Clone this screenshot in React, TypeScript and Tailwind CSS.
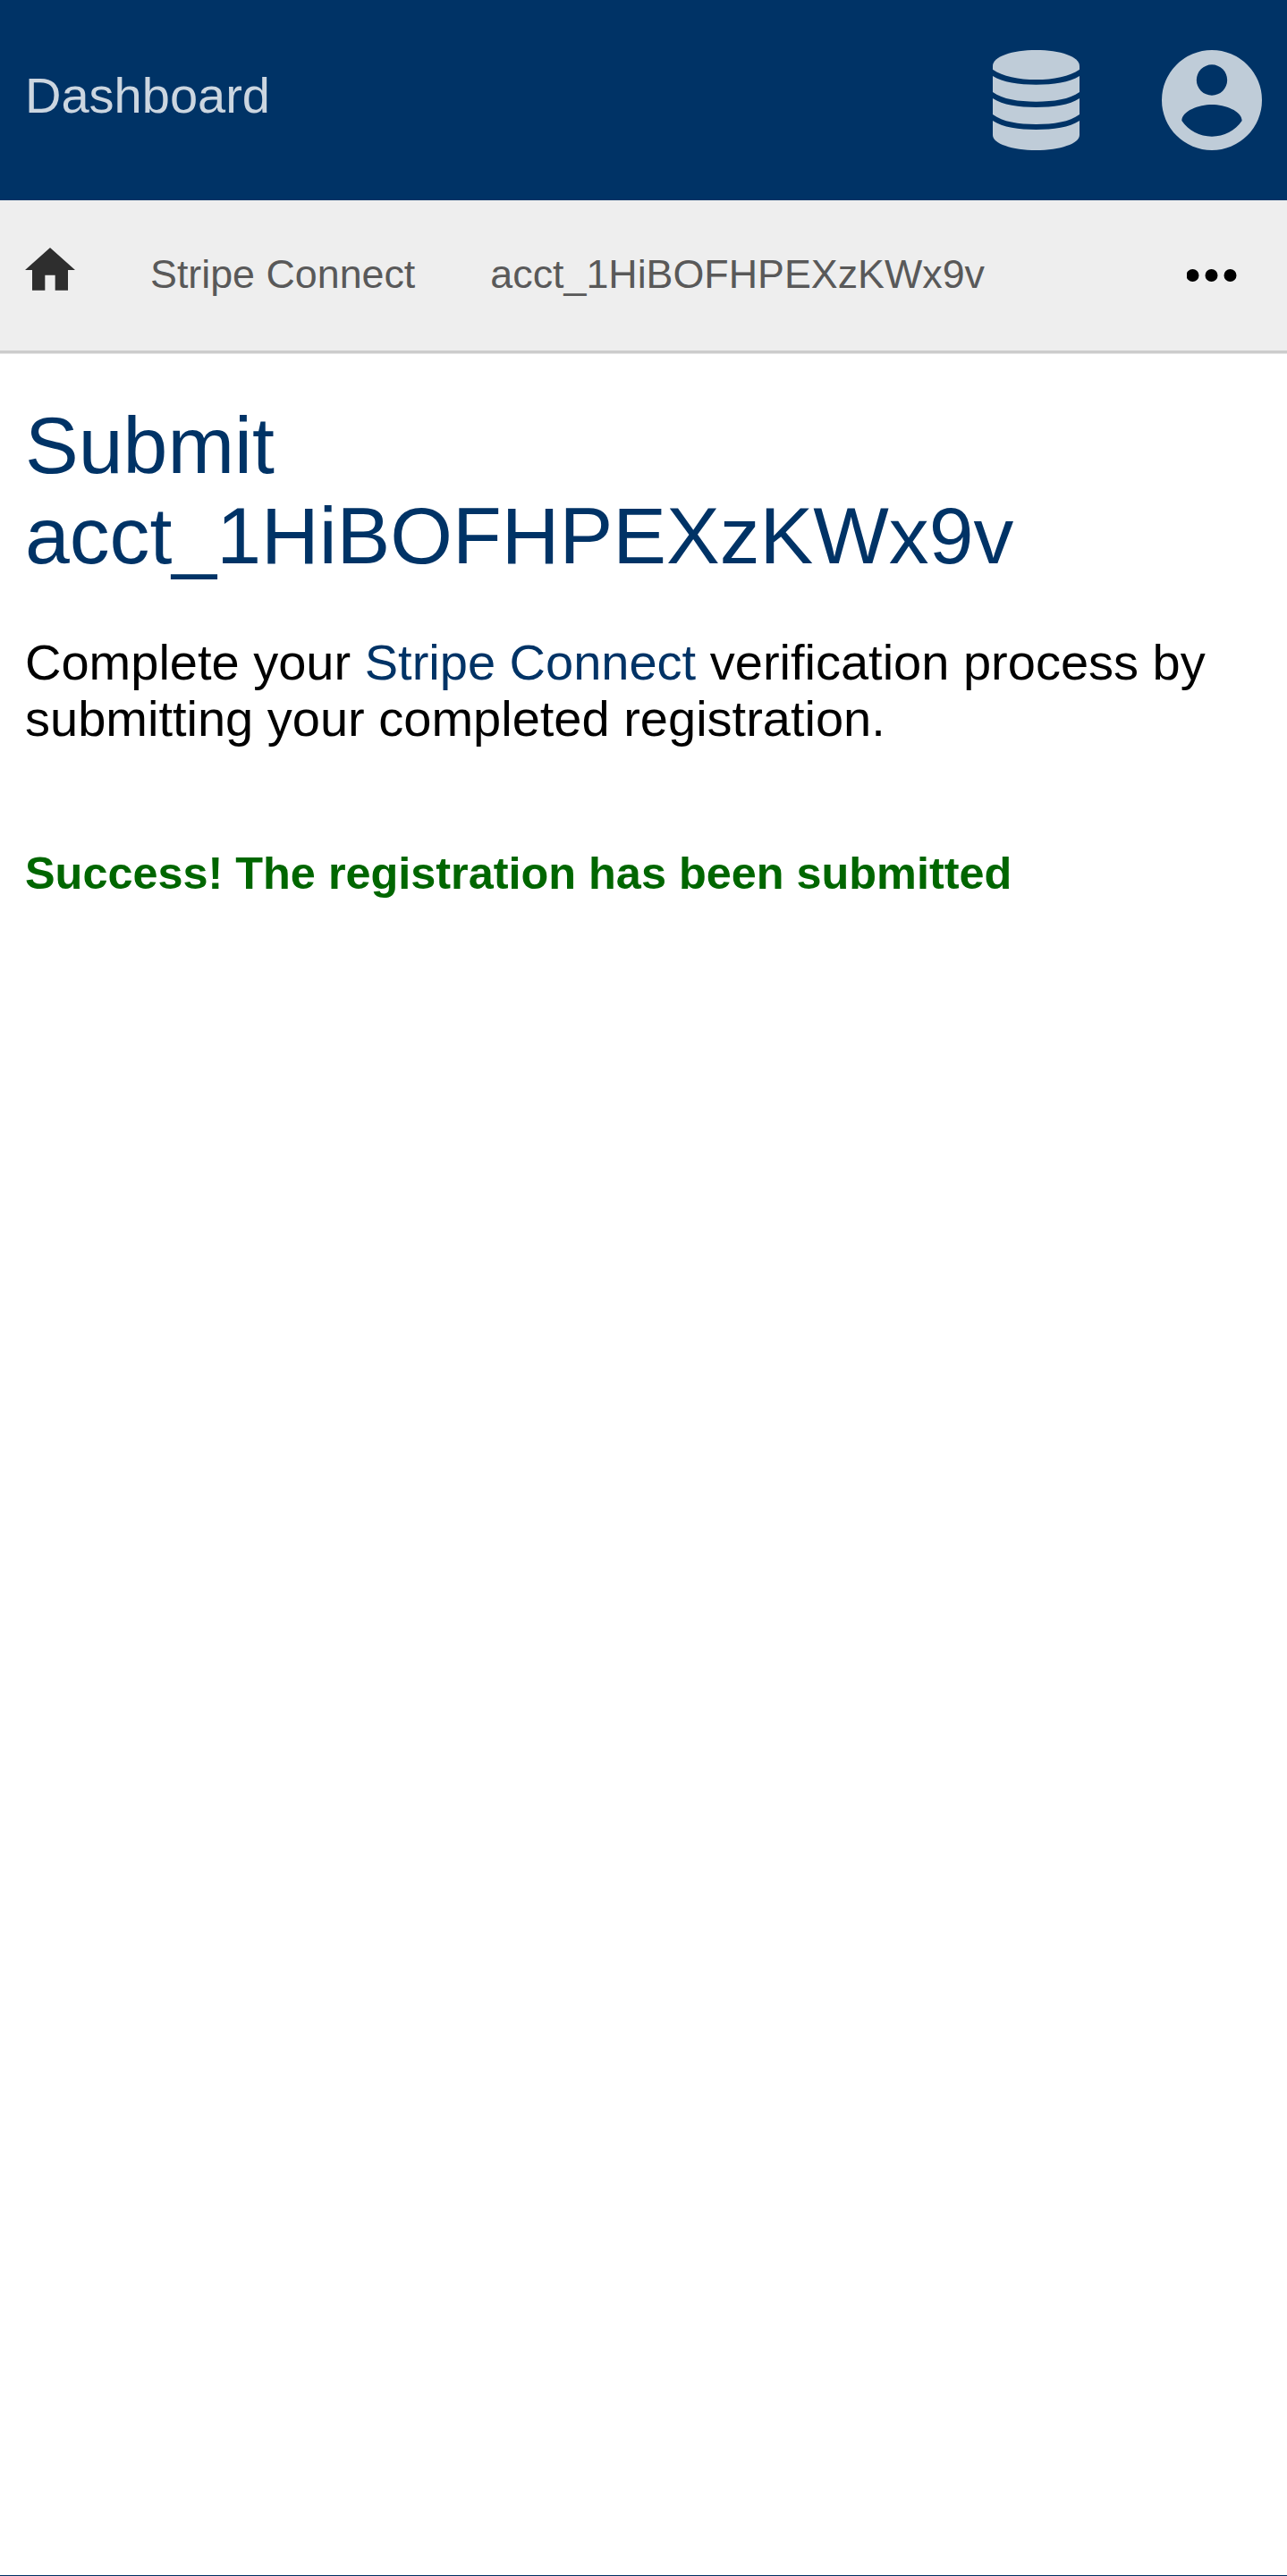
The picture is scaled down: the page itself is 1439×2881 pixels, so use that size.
import React from "react";

export default function App() {
  return (
    <div className="flex h-[2881px] w-[1439px] flex-col border-b border-[#003366] bg-white font-['Liberation_Sans',Arial,sans-serif] text-black">
      <header className="flex h-[224px] shrink-0 items-start justify-between bg-[#003366] px-7 text-[#bfccd8]">
        <a className="mt-[75px] text-[56px] leading-[63px] text-[#ccd6e0]">Dashboard</a>
        <div className="mt-14 flex gap-[92px]">
          <svg className="h-[112px] w-[97px]" viewBox="0 0 291 336" preserveAspectRatio="none" fill="currentColor">
            <path d="M0 53C0 22 65 0 145.500 0S291 22 291 53V65C258 88 204 99 145.500 99S33 88 0 65z" />
            <path d="M0 87C33 108 88 116 145.500 116S258 108 291 87V141C258 165 204 173 145.500 173S33 165 0 141z" />
            <path d="M0 162C33 184 88 192 145.500 192S258 184 291 162V216C258 241 204 249 145.500 249S33 241 0 216z" />
            <path d="M0 237C33 259 88 267 145.500 267S258 259 291 237V285C291 314 226 336 145.500 336S0 314 0 285z" />
          </svg>
          <svg className="h-[112px] w-[112px]" viewBox="0 0 336 336" fill="currentColor">
            <path fillRule="evenodd" d="M168 0a168 168 0 1 0 0 336a168 168 0 1 0 0-336zM168 49a51.500 51.500 0 1 1 0 103a51.500 51.500 0 1 1 0-103zM168 290c-41 0-78-20-101-53c1-33 57-54 101-54s100 21 101 54c-23 33-60 53-101 53z" />
          </svg>
        </div>
      </header>
      <nav className="flex h-[171px] shrink-0 items-start border-b-3 border-[#ccc] bg-[#eee] px-7 text-[44.8px] leading-[50px] text-[#595959]">
        <svg className="mt-[53px] h-12 w-14" viewBox="0 0 168 144" fill="#2e2e2e">
          <path d="M84 0L168 75H144V143H101V92H67V143H24V75H0z" />
        </svg>
        <a className="mt-[57px] ml-[84px]">Stripe Connect</a>
        <a className="mt-[57px] ml-[84px]">acct_1HiBOFHPEXzKWx9v</a>
        <svg className="mt-[77px] mr-7 ml-auto h-[14px] w-14 text-black" viewBox="0 0 56 14" fill="currentColor">
          <circle cx="6.500" cy="7" r="7" />
          <circle cx="27.500" cy="7" r="7" />
          <circle cx="48.500" cy="7" r="7" />
        </svg>
      </nav>
      <main className="border-t border-[#e6e6e6] px-7">
        <h1 className="mt-[52px] text-[89.6px] leading-[101px] text-[#003366]">
          Submit<br />acct_1HiBOFHPEXzKWx9v
        </h1>
        <p className="mt-[59px] text-[56px] leading-[63px]">
          Complete your <a className="text-[#003366]">Stripe Connect</a> verification process by<br />submitting your completed registration.
        </p>
        <p className="mt-[113px] text-[50.4px] leading-[57px] font-bold text-[#006600]">
          Success! The registration has been submitted
        </p>
      </main>
    </div>
  );
}
